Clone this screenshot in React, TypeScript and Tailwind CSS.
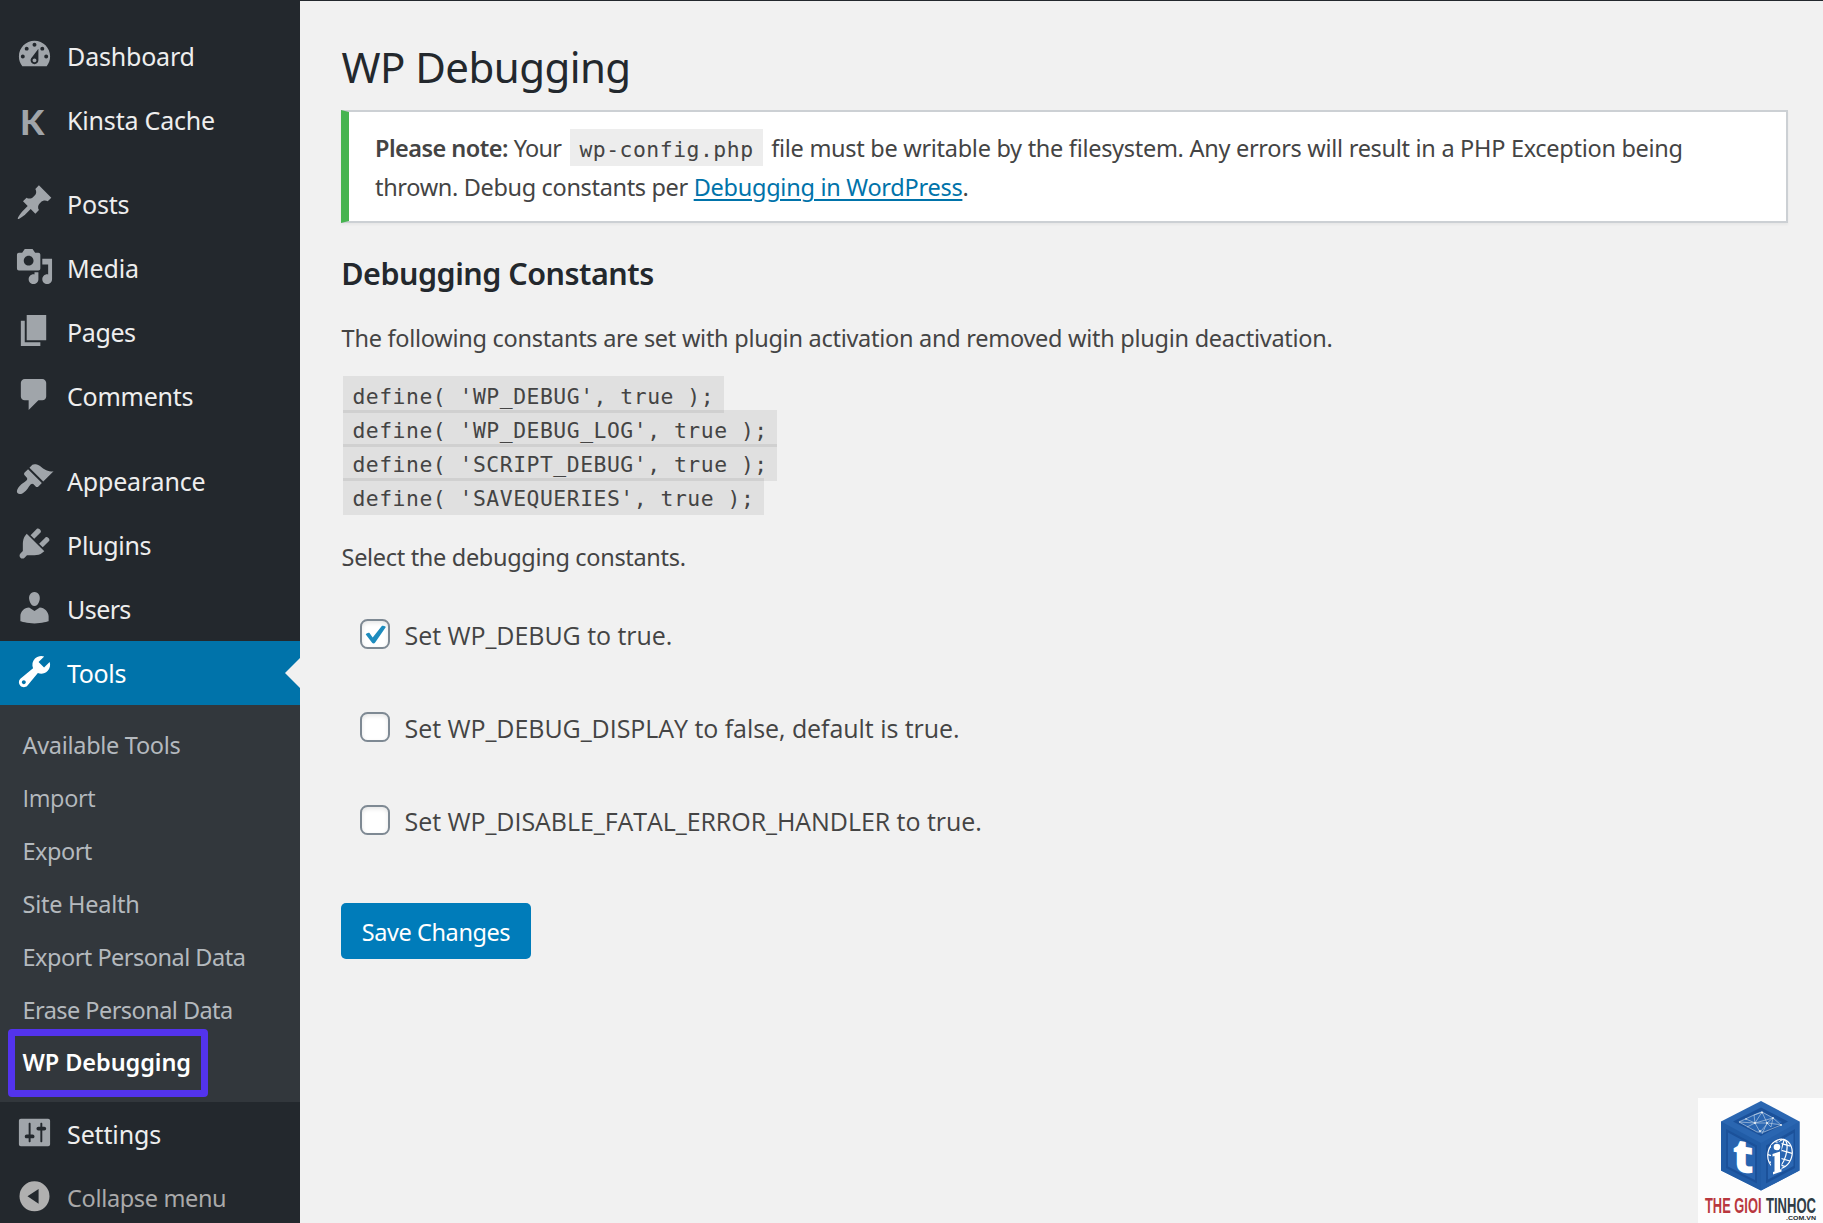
import React from 'react';

type MenuItem = {
  label: string;
  icon: string;
  tracking?: string;
};

const icons = {
  dashboard:
    'M3.76 16h12.48c1.1-1.37 1.76-3.11 1.76-5 0-4.42-3.58-8-8-8s-8 3.58-8 8c0 1.89.66 3.63 1.76 5zM10 4c.55 0 1 .45 1 1s-.45 1-1 1-1-.45-1-1 .45-1 1-1zM6 6c.55 0 1 .45 1 1s-.45 1-1 1-1-.45-1-1 .45-1 1-1zm8 0c.55 0 1 .45 1 1s-.45 1-1 1-1-.45-1-1 .45-1 1-1zm-5.37 5.55L12 7v6c0 1.1-.9 2-2 2s-2-.9-2-2c0-.57.24-1.08.63-1.45zM4 10c.55 0 1 .45 1 1s-.45 1-1 1-1-.45-1-1 .45-1 1-1zm12 0c.55 0 1 .45 1 1s-.45 1-1 1-1-.45-1-1 .45-1 1-1zm-5 3c0-.55-.45-1-1-1s-1 .45-1 1 .45 1 1 1 1-.45 1-1z',
  post: 'M10.44 3.02l1.82-1.82 6.36 6.35-1.83 1.82c-1.05-.68-2.48-.57-3.41.36l-.75.75c-.92.93-1.04 2.35-.35 3.41l-1.83 1.82-2.41-2.41-2.8 2.79c-.42.42-3.38 2.71-3.8 2.29s1.86-3.39 2.28-3.81l2.79-2.79L4.1 9.36l1.83-1.82c1.05.69 2.48.57 3.4-.36l.75-.75c.93-.92 1.05-2.35.36-3.41z',
  media:
    'M13 11V4c0-.55-.45-1-1-1h-1.67L9 1H5L3.67 3H2c-.55 0-1 .45-1 1v7c0 .55.45 1 1 1h10c.55 0 1-.45 1-1zM7 4.5c1.38 0 2.5 1.12 2.5 2.5S8.38 9.5 7 9.5 4.5 8.38 4.5 7 5.62 4.5 7 4.5zM14 6h5v10.5c0 1.38-1.12 2.5-2.5 2.5S14 17.88 14 16.5s1.12-2.5 2.5-2.5c.17 0 .34.02.5.05V9h-3V6zm-4 8.05V13h2v3.5c0 1.38-1.12 2.5-2.5 2.5S7 17.88 7 16.5 8.12 14 9.5 14c.17 0 .34.02.5.05z',
  page: 'M6 15V2h10v13H6zm-1 1h8v2H3V5h2v11z',
  comments: 'M5 2h9c1.1 0 2 .9 2 2v7c0 1.1-.9 2-2 2h-2l-5 5v-5H5c-1.1 0-2-.9-2-2V4c0-1.1.9-2 2-2z',
  appearance:
    'M14.48 11.06L7.41 3.99l1.5-1.5c.5-.56 2.3-.47 3.51.32 1.21.8 1.43 1.28 2.91 2.1 1.18.64 2.45 1.26 4.45.85zm-.71.71L6.7 4.7 4.93 6.47c-.39.39-.39 1.02 0 1.41l1.06 1.06c.39.39.39 1.03 0 1.42-.6.6-1.43 1.11-2.21 1.69-.35.26-.7.53-1.01.84C1.43 14.23.4 16.08 1.4 17.07c.99 1 2.84-.03 4.18-1.36.31-.31.58-.66.85-1.02.57-.78 1.08-1.61 1.69-2.21.39-.39 1.02-.39 1.41 0l1.06 1.06c.39.39 1.02.39 1.41 0z',
  plugins:
    'M13.11 4.36L9.87 7.6 8 5.73l3.24-3.24c.35-.34 1.05-.2 1.56.32.52.51.66 1.21.31 1.55zm-8 1.77l.91-1.12 9.01 9.01-1.19.84c-.71.71-2.63 1.16-3.82 1.16H6.14L4.9 17.26c-.59.59-1.54.59-2.12 0-.59-.58-.59-1.53 0-2.12l1.24-1.24v-3.88c0-1.13.4-3.19 1.09-3.89zm7.26 3.97l3.24-3.24c.34-.35 1.04-.21 1.55.31.52.51.66 1.21.31 1.55l-3.24 3.25z',
  users:
    'M10 9.25c-2.27 0-2.73-3.44-2.73-3.44C7 4.02 7.82 2 9.97 2c2.16 0 2.98 2.02 2.71 3.81 0 0-.41 3.44-2.68 3.44zm0 2.57L12.72 10c2.39 0 4.52 2.33 4.52 4.53v2.49s-3.65 1.13-7.24 1.13c-3.65 0-7.24-1.13-7.24-1.13v-2.49c0-2.25 1.94-4.48 4.47-4.48z',
  tools:
    'M16.68 9.77c-1.34 1.34-3.3 1.67-4.95.99l-5.41 6.52c-.99.99-2.59.99-3.58 0s-.99-2.59 0-3.57l6.52-5.42c-.68-1.65-.35-3.61.99-4.95 1.28-1.28 3.12-1.62 4.72-1.06l-2.89 2.89 2.82 2.82 2.86-2.87c.53 1.58.18 3.39-1.08 4.65zM3.81 16.21c.4.39 1.04.39 1.43 0 .4-.4.4-1.04 0-1.43-.39-.4-1.03-.4-1.43 0-.39.39-.39 1.03 0 1.43z',
  settings:
    'M18 16V4c0-.55-.45-1-1-1H3c-.55 0-1 .45-1 1v12c0 .55.45 1 1 1h14c.55 0 1-.45 1-1zM8 11h1c.55 0 1 .45 1 1s-.45 1-1 1H8v1.5c0 .28-.22.5-.5.5s-.5-.22-.5-.5V13H6c-.55 0-1-.45-1-1s.45-1 1-1h1V5.5c0-.28.22-.5.5-.5s.5.22.5.5V11zm5-2h-1c-.55 0-1-.45-1-1s.45-1 1-1h1V5.5c0-.28.22-.5.5-.5s.5.22.5.5V7h1c.55 0 1 .45 1 1s-.45 1-1 1h-1v5.5c0 .28-.22.5-.5.5s-.5-.22-.5-.5V9z',
  collapse: 'M10 2.2a7.7 7.7 0 1 0 0 15.4 7.7 7.7 0 0 0 0-15.4zM12.1 6.1v7.6L6.4 9.9z',
};

const contentItems: MenuItem[] = [
  { label: 'Posts', icon: icons.post },
  { label: 'Media', icon: icons.media },
  { label: 'Pages', icon: icons.page, tracking: 'tracking-[-0.4px]' },
  { label: 'Comments', icon: icons.comments, tracking: 'tracking-[-0.28px]' },
];

const adminItems: MenuItem[] = [
  { label: 'Appearance', icon: icons.appearance },
  { label: 'Plugins', icon: icons.plugins, tracking: 'tracking-[-0.3px]' },
  { label: 'Users', icon: icons.users, tracking: 'tracking-[-0.6px]' },
];

const toolsItems = [
  { label: 'Available Tools', style: 'tracking-[-0.3px]' },
  { label: 'Import', style: "font-['Open_Sans',sans-serif] tracking-[-0.35px]" },
  { label: 'Export', style: 'tracking-[-0.5px]' },
  { label: 'Site Health', style: 'tracking-[-0.25px]' },
  { label: 'Export Personal Data', style: 'tracking-[-0.51px]' },
  { label: 'Erase Personal Data', style: 'tracking-[-0.55px]' },
  { label: 'WP Debugging', style: 'font-semibold tracking-[-0.08px] text-white' },
];

const constants = [
  "define( 'WP_DEBUG', true );",
  "define( 'WP_DEBUG_LOG', true );",
  "define( 'SCRIPT_DEBUG', true );",
  "define( 'SAVEQUERIES', true );",
];

const options = [
  { label: 'Set WP_DEBUG to true.', checked: true },
  { label: 'Set WP_DEBUG_DISPLAY to false, default is true.', checked: false },
  { label: 'Set WP_DISABLE_FATAL_ERROR_HANDLER to true.', checked: false },
];

const codeStyle =
  "bg-black/7 px-[9.4px] pt-2 pb-1 font-['DejaVu_Sans_Mono',monospace] text-[21.4px] tracking-[0.52px] whitespace-pre";

const Icon = ({ d, className }: { d: string; className: string }) => (
  <svg viewBox="0 0 20 20" className={`mt-[11px] size-[39px] shrink-0 fill-current ${className}`}>
    <path fillRule="evenodd" d={d} />
  </svg>
);

const Item = ({ label, icon, tracking = 'tracking-[-0.2px]' }: MenuItem) => (
  <li className="flex h-16 gap-[13.5px] pl-[14.6px]">
    <Icon d={icon} className="text-[#a0a5aa]" />
    <span className={`text-[25px] leading-16 text-[#eee] ${tracking}`}>{label}</span>
  </li>
);

const Logo = () => (
  <svg viewBox="0 0 125 125" className="size-full">
    <path fill="#2a66b1" d="M63 3l38.5 20.5v49L63 92.5 23 72.5v-49z" />
    <path fill="#215ca6" d="M23 23.5L63 45v47.5L23 72.5z" />
    <path fill="#2560ab" d="M63 45l38.5-21.5v49L63 92.5z" />
    <path fill="#1b519a" d="M28 31l31 16.5v38L28 70z" />
    <path fill="#2864b0" d="M30 34.500l27 14.500v33L30 68.500z" />
    <path fill="#1b519a" d="M68 47.500L97 31v39L68 85.500z" />
    <path fill="#2a66b2" d="M70 49.500L95.500 35v33L70 81.500z" />
    <path fill="#1b519a" d="M63 9.500l27 14L63 38 35 23.500z" />
    <path fill="#2a66b2" d="M63 13l21 11L63 36 40 23.500z" />
    <g fill="none" stroke="#c8d6e6" strokeWidth=".6">
      <path d="M41 24l15-7 8-3 11 6 8 7-17 7-7 0-18-10zM41 24l16 1 7-11-8 3 1 8 12 0 6-5-18 5 5 9 8-9 14 2M48 21l9 4-8 4M64 14l5 11-5 11M75 20l-2 9-4-4" />
    </g>
    <g fill="#e9eff5">
      <circle cx="57" cy="25" r="1.1" />
      <circle cx="64" cy="14.500" r="1" />
      <circle cx="69" cy="25" r="1.1" />
      <circle cx="75" cy="20" r=".9" />
      <circle cx="83" cy="27" r=".9" />
      <circle cx="62" cy="33" r=".9" />
      <circle cx="48" cy="21" r=".8" />
    </g>
    <text
      x="34.500"
      y="67"
      fill="#fff"
      fontSize="46"
      fontWeight="800"
      transform="skewY(9)"
      className="font-['Open_Sans',sans-serif]"
    >
      t
    </text>
    <g fill="none" stroke="#fff" strokeWidth="1.2" transform="rotate(16 82 56)">
      <ellipse cx="82" cy="56" rx="12" ry="15" />
      <ellipse cx="82" cy="56" rx="6" ry="15" />
      <path d="M82 41v30M70.500 52h23M70.500 60h23M74 45.500h16M74 66.500h16" />
    </g>
    <path fill="#2a66b2" d="M73 47l10.500-4v30L73 77z" />
    <circle cx="79" cy="49" r="3.3" fill="#fff" />
    <path fill="#fff" d="M74.500 56l7.500-2.500v18l1.500-.5v2.500l-8.500 3V74l1.500-.5V58l-2 .5z" />
    <g fontWeight="700" className="font-['Liberation_Sans',sans-serif]">
      <text transform="translate(7 115) scale(.585 1)" fill="#b9383f" fontSize="22">
        THE GIOI
      </text>
      <text transform="translate(68 115) scale(.593 1)" fill="#2f3d47" fontSize="22">
        TINHOC
      </text>
      <text transform="translate(88 122) scale(1.17 1)" fill="#22282d" fontSize="6">
        .COM.VN
      </text>
    </g>
  </svg>
);

const Sidebar = () => (
  <nav className="w-[300px] shrink-0 bg-[#23282d] pt-[23px]">
    <ul>
      <Item label="Dashboard" icon={icons.dashboard} />
      <li className="flex h-16 gap-[13.5px] pl-[14.6px]">
        <span className="w-[39px] pl-[5.5px] font-['Lato',sans-serif] text-[35px] leading-[67px] font-black text-[#a0a5aa]">
          K
        </span>
        <span className="text-[25px] leading-16 tracking-[-0.2px] text-[#eee]">Kinsta Cache</span>
      </li>
    </ul>

    <ul className="mt-5">
      {contentItems.map((item) => (
        <Item key={item.label} {...item} />
      ))}
    </ul>

    <ul className="mt-[21px]">
      {adminItems.map((item) => (
        <Item key={item.label} {...item} />
      ))}
      <li>
        <div className="relative flex h-16 gap-[13.5px] bg-[#0073aa] pl-[14.6px] text-white">
          <Icon d={icons.tools} className="text-white" />
          <span className="text-[25px] leading-16 tracking-[-0.38px]">Tools</span>
          <svg viewBox="0 0 15 30" className="absolute top-[17px] right-0 h-[30px] w-[15px] fill-[#f1f1f1]">
            <path d="M15 0v30L0 15z" />
          </svg>
        </div>
        <div className="relative h-[397px] bg-[#32373c] pt-[14px] pl-[22.5px]">
          <ul className="text-[23.5px] leading-[52.9px] text-[#b4b9be]">
            {toolsItems.map(({ label, style }) => (
              <li key={label} className={style}>
                {label}
              </li>
            ))}
          </ul>
          <span className="absolute bottom-[5px] left-2 h-17 w-50 rounded-[4px] border-7 border-[#5333ed]" />
        </div>
      </li>
      <Item label="Settings" icon={icons.settings} tracking="tracking-[-0.15px]" />
      <li className="flex h-[57px] gap-[13.5px] pl-[14.6px] text-[#aaa]">
        <Icon d={icons.collapse} className="text-[#b0b0b0]" />
        <span className="text-[23.5px] leading-[65px] tracking-[-0.35px]">Collapse menu</span>
      </li>
    </ul>
  </nav>
);

const App = () => {
  return (
    <div className="relative flex h-[1223px] w-[1823px] overflow-hidden border-t border-[#23282d] bg-[#f1f1f1] font-['Noto_Sans',sans-serif] text-[#444]">
      <Sidebar />

      <main className="flex-1 pt-[38px] pr-[35.5px] pl-[41px] text-[23.5px]">
        <h1 className="pl-[0.6px] text-[42px] leading-14 tracking-[-0.57px] text-[#23282d]">WP Debugging</h1>

        <div className="mt-[15px] h-[113px] border-2 border-l-8 border-[#ccd0d4] border-l-[#46b450] bg-white pt-[18.3px] pr-5 pl-[26px] leading-[37.5px] tracking-[-0.29px] shadow-[0_2px_2px_rgba(0,0,0,0.04)]">
          <p>
            <strong className="font-semibold tracking-[-0.53px]">Please note:</strong>{' '}
            <span className="tracking-[-0.8px]">Your</span>{' '}
            <code className={`mr-[2.5px] ml-[3px] ${codeStyle}`}>wp-config.php</code>{' '}
            file must be writable by the filesystem. Any errors will result in a PHP Exception being{' '}
            <span className="tracking-[-0.34px]">thrown. Debug constants per </span>
            <a href="#" className="tracking-[-0.27px] text-[#0073aa] underline decoration-2 underline-offset-3">
              Debugging in WordPress
            </a>
            .
          </p>
        </div>

        <h2 className="mt-[30px] pl-[0.3px] text-[30.5px] leading-10 font-semibold tracking-[-0.5px] text-[#23282d]">
          Debugging Constants
        </h2>
        <p className="mt-[27px] pl-[0.6px] leading-9 tracking-[-0.27px]">
          The following constants are set with plugin activation and removed with plugin deactivation.
        </p>

        <div className="mt-[22px] ml-[2px] leading-[34px]">
          {constants.map((line) => (
            <div key={line} className="h-[34px]">
              <code className={codeStyle}>{line}</code>
            </div>
          ))}
        </div>

        <p className="mt-[25px] pl-[0.6px] leading-9 tracking-[-0.32px]">Select the debugging constants.</p>

        <div className="mt-[44.4px] flex flex-col gap-[61px] pl-[19px]">
          {options.map(({ label, checked }) => (
            <label key={label} className="flex h-8 items-start gap-[14.5px]">
              <span className="size-[30px] rounded-[7.5px] border-2 border-[#7e8993] bg-white shadow-[inset_0_2px_4px_rgba(0,0,0,0.1)]">
                {checked && (
                  <svg viewBox="0 0 26 26" className="size-[26px] fill-[#1e8cbe]">
                    <path d="M3.8 13.600c-.4-1 2.900-2.600 3.700-1.700l3.200 4.500L19.800 5c.9-1 4.500.2 3.900 1.300L13 21.800c-.6.900-2.300.900-2.900 0z" />
                  </svg>
                )}
              </span>
              <span className="font-['Open_Sans',sans-serif] text-[25px] leading-8 tracking-[-0.05px]">{label}</span>
            </label>
          ))}
        </div>

        <button className="mt-[66px] block h-14 w-[190px] rounded-[5px] bg-[#007cba] pt-px leading-[57px] tracking-[-0.42px] text-white">
          Save Changes
        </button>
      </main>

      <div className="absolute right-0 bottom-0 size-[125px] bg-[#fdfdfd]">
        <Logo />
      </div>
    </div>
  );
};

export default App;
